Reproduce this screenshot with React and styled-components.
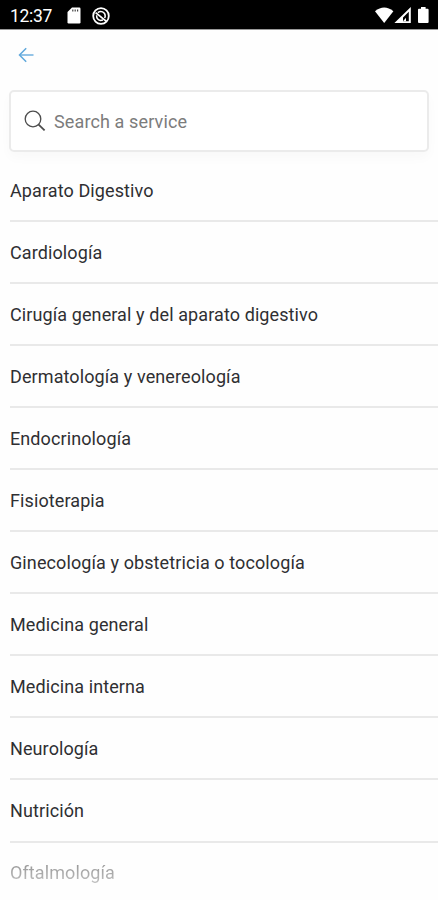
import React from 'react';
import styled, { createGlobalStyle } from 'styled-components';

const services = [
  'Aparato Digestivo',
  'Cardiología',
  'Cirugía general y del aparato digestivo',
  'Dermatología y venereología',
  'Endocrinología',
  'Fisioterapia',
  'Ginecología y obstetricia o tocología',
  'Medicina general',
  'Medicina interna',
  'Neurología',
  'Nutrición',
  'Oftalmología',
];

export default function App() {
  return (
    <>
      <GlobalStyle />
      <Screen>
        <StatusBar>
          <Clock>12:37</Clock>
          <SdCardIcon />
          <SyncOffIcon />
          <Spacer />
          <SystemIcons />
        </StatusBar>
        <Header>
          <BackButton aria-label="Back">
            <svg width="16" height="16" viewBox="0 0 16 16" fill="none">
              <path d="M2 8H15.5" stroke="#8fc1e6" strokeWidth="1.9" />
              <path d="M8.2 1.2L1.5 8L8.2 14.8" stroke="#5fa8dc" strokeWidth="1.5" />
            </svg>
          </BackButton>
        </Header>
        <SearchBox>
          <svg width="22" height="22" viewBox="0 0 22 22" fill="none" stroke="#4c4c4c" strokeWidth="1.3">
            <circle cx="9" cy="9" r="7.8" />
            <path d="M14.4 14.4L20.6 20.4" strokeWidth="1.8" />
          </svg>
          <SearchInput placeholder="Search a service" />
        </SearchBox>
        <List>
          {services.map((name) => (
            <Row key={name}>{name}</Row>
          ))}
        </List>
      </Screen>
    </>
  );
}

function SdCardIcon() {
  return (
    <svg width="14" height="17" viewBox="0 0 14 17">
      <path d="M5 .5H12.3Q13.5 .5 13.5 1.7V15.2Q13.5 16.4 12.3 16.4H1.7Q.5 16.4 .5 15.2V5Z" fill="#fff" />
      <path d="M5.8 2.5V4.5M8.2 2.5V4.5M10.6 2.5V4.5" stroke="#444" strokeWidth="1.2" />
    </svg>
  );
}

function SyncOffIcon() {
  return (
    <svg width="18" height="18" viewBox="0 0 18 18" fill="none" stroke="#fff">
      <circle cx="9" cy="9" r="7.8" strokeWidth="1.8" />
      <path d="M5.8 5.6Q8 4 10.6 4.9Q13.4 6.2 13.2 9.3L12.7 11" strokeWidth="1.5" />
      <path d="M4.6 8.2Q4.4 12.6 8.6 13.4L11 13.1" strokeWidth="1.5" />
      <path d="M3.6 5.6L14.4 14.4" strokeWidth="1.8" />
    </svg>
  );
}

function SystemIcons() {
  return (
    <svg width="55" height="17" viewBox="0 0 55 17" fill="#fff">
      <path d="M0 4.3Q9.2 -3.2 18.4 4.3L9.2 16Z" />
      <path fillRule="evenodd" d="M19.4 16L35.8 0V16ZM28 14.2H33.8V4.8L28 10.6Z" />
      <path d="M28 14.2L31 10.8V14.2Z" />
      <path d="M46 0H50.6V1.7H52.6Q53.6 1.7 53.6 2.7V15Q53.6 16 52.6 16H44Q43 16 43 15V2.7Q43 1.7 44 1.7H46Z" />
    </svg>
  );
}

const GlobalStyle = createGlobalStyle`
  body {
    margin: 0;
    background: #fff;
    font-family: Roboto, sans-serif;
  }
  * {
    box-sizing: border-box;
  }
  svg {
    display: block;
    flex-shrink: 0;
  }
`;

const Screen = styled.main`
  height: 900px;
  overflow: hidden;
  display: flex;
  flex-direction: column;
  background: #fefefe;
`;

const StatusBar = styled.div`
  display: flex;
  align-items: center;
  height: 30px;
  flex-shrink: 0;
  padding: 2px 8px 0 10px;
  background: #000;
  border-bottom: 1px solid #999;
  color: #fff;
`;

const Clock = styled.span`
  width: 57px;
  font-size: 17.5px;
  letter-spacing: -0.3px;
  & + svg {
    margin-right: 11px;
  }
`;

const Spacer = styled.div`
  flex: 1;
`;

const Header = styled.header`
  height: 60px;
  flex-shrink: 0;
  padding: 17px 18px;
`;

const BackButton = styled.button`
  padding: 0;
  border: 0;
  background: none;
`;

const SearchBox = styled.label`
  display: flex;
  align-items: center;
  gap: 8px;
  height: 62px;
  flex-shrink: 0;
  margin: 0 9px;
  padding: 0 13px;
  background: #fff;
  border: 2px solid #ebebeb;
  border-radius: 5px;
  box-shadow: 0 6px 12px rgba(0, 0, 0, 0.025);
`;

const SearchInput = styled.input`
  flex: 1;
  min-width: 0;
  padding: 0;
  border: 0;
  outline: 0;
  background: none;
  font-family: inherit;
  font-size: 18px;
  letter-spacing: 0.12px;
  color: #2b2b2e;
  &::placeholder {
    color: #7c7c7c;
  }
`;

const List = styled.ul`
  margin: 8px 0 0;
  padding: 0 0 0 10px;
  list-style: none;
`;

const Row = styled.li`
  display: flex;
  align-items: center;
  height: 62.05px;
  border-bottom: 2px solid #e9e9e9;
  font-size: 18px;
  letter-spacing: 0.1px;
  color: #2f2f32;
  &:last-child {
    height: 60px;
    border-bottom: 0;
    background: linear-gradient(#909090 30%, #c4c4c4 70%);
    background-clip: text;
    color: transparent;
  }
`;
